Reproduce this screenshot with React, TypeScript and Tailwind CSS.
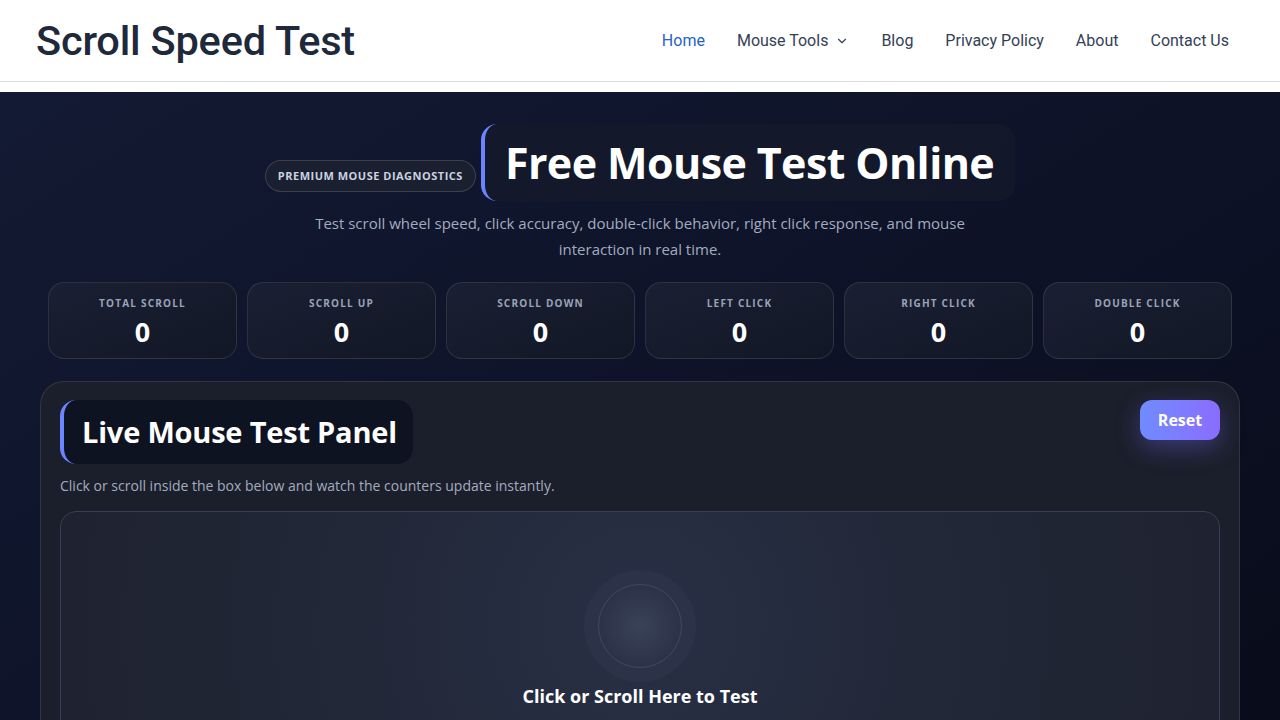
import { ChevronDown } from "lucide-react";

const stats = [
  { label: "Total Scroll", value: 0 },
  { label: "Scroll Up", value: 0 },
  { label: "Scroll Down", value: 0 },
  { label: "Left Click", value: 0 },
  { label: "Right Click", value: 0 },
  { label: "Double Click", value: 0 },
];

const navLinks = ["Home", "Mouse Tools", "Blog", "Privacy Policy", "About", "Contact Us"];

const Header = () => (
  <header className="bg-white font-['Roboto',sans-serif]">
    <div className="flex h-[82px] items-center justify-between border-b border-[#d9dce1] pl-9 pr-[51px] pt-[1px]">
      <h1 className="text-[41.5px] font-medium tracking-[-0.2px] text-[#1e293b]">Scroll Speed Test</h1>
      <nav className="flex items-center gap-8 text-[16px] text-[#334155]">
        {navLinks.map((link) => (
          <a
            key={link}
            href="#"
            className={`flex items-center gap-[7px] ${link === "Home" ? "text-[#2563c9]" : ""}`}
          >
            {link}
            {link === "Mouse Tools" && <ChevronDown className="h-[14px] w-[14px]" strokeWidth={2} />}
          </a>
        ))}
      </nav>
    </div>
    <div className="h-[10px]" />
  </header>
);

const StatCard = ({ label, value }: { label: string; value: number }) => (
  <div className="flex h-[77px] flex-col items-center justify-center rounded-2xl border border-white/10 bg-gradient-to-br from-[#1a2033] to-[#121726] pt-[5px]">
    <div className="text-[10px] font-bold uppercase tracking-[1.2px] text-[#9aa3b8]">{label}</div>
    <div className="mt-[3px] text-[27px] font-bold leading-[36px] text-white">{value}</div>
  </div>
);

export default function App() {
  return (
    <div className="min-h-screen bg-white">
      <Header />
      <main className="bg-gradient-to-br from-[#131a33] via-[#0d1227] to-[#070a16] pb-10 font-['Open_Sans',sans-serif]">
        <div className="mx-auto max-w-[1200px]">
          <section className="flex flex-col items-center pt-8">
            <div className="flex items-center">
              <span className="mt-[27px] rounded-full border border-white/15 bg-[#1a2030] px-3 py-[7px] text-[11px] font-bold tracking-[0.5px] text-[#cbd2e0]">
                PREMIUM MOUSE DIAGNOSTICS
              </span>
              <h2 className="ml-[5px] rounded-2xl border-l-4 border-[#6c84ff] bg-[#141a2b]/80 py-[10px] pl-5 pr-[21px] text-[43px] font-bold leading-[57px] tracking-[-0.6px] text-white">
                Free Mouse Test Online
              </h2>
            </div>
            <p className="mt-[9px] max-w-[660px] text-center text-[15px] leading-[26px] text-[#a3acbf]">
              Test scroll wheel speed, click accuracy, double-click behavior, right click response, and mouse
              interaction in real time.
            </p>
          </section>

          <div className="mt-5 grid grid-cols-6 gap-[10px] px-2">
            {stats.map((s) => (
              <StatCard key={s.label} label={s.label} value={s.value} />
            ))}
          </div>

          <section className="mt-[22px] rounded-3xl border border-white/10 bg-[#1b1f2b] px-[19px] pt-[18px] pb-8">
            <div className="flex items-start justify-between">
              <h3 className="rounded-2xl border-l-4 border-[#6c84ff] bg-[#0e1322] py-[10px] pl-[18px] pr-4 text-[29px] font-bold leading-[44px] tracking-[-0.2px] text-white">
                Live Mouse Test Panel
              </h3>
              <button className="h-10 w-20 rounded-xl bg-gradient-to-r from-[#6f8bff] to-[#8a6cff] text-[16px] font-bold text-white shadow-[0_8px_24px_rgba(120,110,255,0.35)]">
                Reset
              </button>
            </div>
            <p className="mt-[11px] text-[14px] text-[#a3acbf]">
              Click or scroll inside the box below and watch the counters update instantly.
            </p>
            <div className="mt-[15px] flex h-[320px] flex-col items-center rounded-2xl border border-[#363d55] bg-[radial-gradient(circle_at_50%_35%,#283046_0%,#222838_45%,#1e2230_100%)] pt-[58px]">
              <div className="flex h-[112px] w-[112px] items-center justify-center rounded-full bg-[#2c3349]">
                <div className="h-[84px] w-[84px] rounded-full border border-[#404961] bg-[radial-gradient(circle,#3a4259_0%,#2c3348_70%)]" />
              </div>
              <div className="mt-[2px] text-[18px] font-bold leading-[24px] text-white">Click or Scroll Here to Test</div>
            </div>
          </section>
        </div>
      </main>
    </div>
  );
}
